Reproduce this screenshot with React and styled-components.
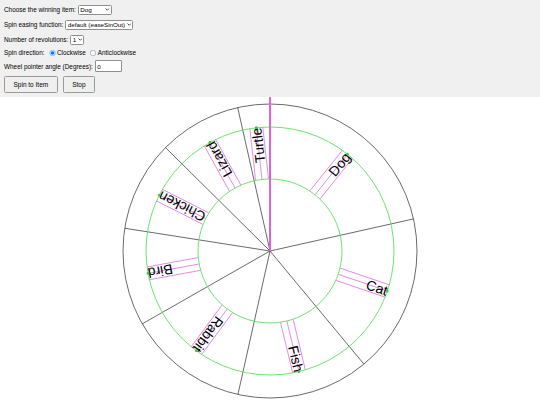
import React from 'react';
import styled, { createGlobalStyle } from 'styled-components';

const GlobalStyle = createGlobalStyle`
  html, body {
    margin: 0;
    padding: 0;
    background: #fff;
  }
  body {
    font-family: "Liberation Sans", Arial, sans-serif;
    font-size: 13px;
    color: #000;
  }
`

// the controls are laid out at normal size, then zoomed to half like the page
const Panel = styled.div`
  zoom: 0.5;
  background: #f0f0f0;
  padding: 9px 8px 8px;
  display: flex;
  flex-direction: column;
  gap: 10px;
`
const Row = styled.div`
  display: flex;
  align-items: center;
  gap: ${p => p.gap ?? 4}px;
  height: ${p => p.h || 20}px;
`
const Label = styled.label`
  font-size: 12.8px;
  white-space: nowrap;
`
const SelectWrap = styled.span`
  position: relative;
  display: inline-flex;
`
const Select = styled.select`
  appearance: none;
  font-family: "Liberation Sans", Arial, sans-serif;
  font-size: 12.5px;
  color: #000;
  height: 20px;
  width: ${p => p.w}px;
  padding: 0 12px 0 3px;
  background: #fff;
  border: 1px solid #8f8f8f;
  border-radius: 3px;
  overflow: hidden;
  text-overflow: clip;
`
const Chevron = styled.svg`
  position: absolute;
  right: 4px;
  top: 7px;
  pointer-events: none;
`
const Radio = styled.input`
  margin: 0 3px 0 ${p => p.ml || 5}px;
  width: 13px;
  height: 13px;
`
const NumberInput = styled.input`
  font-family: "Liberation Sans", Arial, sans-serif;
  font-size: 12.5px;
  width: 44px;
  height: 17px;
  padding: 1px 3px;
  box-sizing: content-box;
  background: #fff;
  border: 1px solid #8f8f8f;
  border-radius: 2px;
`
const Buttons = styled.div`
  display: flex;
  gap: 10px;
`
const Button = styled.button`
  font-family: "Liberation Sans", Arial, sans-serif;
  font-size: 13px;
  color: #000;
  height: 34px;
  padding: 0 17px;
  background: #efefef;
  border: 1px solid #9a9a9a;
  border-radius: 3px;
`
const WheelArea = styled.div`
  height: 309px;
  overflow: hidden;
`

const CX = 270;
const CY = 154;
const R = 147;
const LABEL_R = 124;
const LABEL_R_MAX = 72;

const items = [
  { label: 'Dog', from: 0, to: 77.4 },
  { label: 'Cat', from: 77.4, to: 140.3 },
  { label: 'Fish', from: 140.3, to: 192.6 },
  { label: 'Rabbit', from: 192.6, to: 240.3 },
  { label: 'Bird', from: 240.3, to: 278.9 },
  { label: 'Chicken', from: 278.9, to: 314.7 },
  { label: 'Lizard', from: 314.7, to: 347.3 },
  { label: 'Turtle', from: 347.3, to: 360 },
];

const pt = (a, r) => {
  const rad = (a * Math.PI) / 180;
  return [CX + r * Math.sin(rad), CY - r * Math.cos(rad)];
};

const Dropdown = ({ w, defaultValue, children }) => (
  <SelectWrap>
    <Select w={w} defaultValue={defaultValue}>{children}</Select>
    <Chevron width="9" height="6" viewBox="0 0 9 6">
      <polyline points="1,1 4.5,4.5 8,1" fill="none" stroke="#222" strokeWidth="1.6" />
    </Chevron>
  </SelectWrap>
);

const Wheel = () => (
  <svg width="540" height="309" viewBox="0 0 540 309">
    <circle cx={CX} cy={CY} r={R} fill="#fff" stroke="#444" strokeWidth="0.8" />
    {items.map(it => {
      const [x, y] = pt(it.from, R);
      return <line key={it.label} x1={CX} y1={CY} x2={x} y2={y} stroke="#444" strokeWidth="0.8" />;
    })}
    <circle cx={CX} cy={CY} r={LABEL_R} fill="none" stroke="#5ee05e" strokeWidth="0.9" />
    <circle cx={CX} cy={CY} r={LABEL_R_MAX} fill="none" stroke="#5ee05e" strokeWidth="0.9" />
    {items.map(it => {
      const mid = (it.from + it.to) / 2;
      return (
        <g key={it.label} transform={`rotate(${mid - 90} ${CX} ${CY})`}>
          {[-6.5, 0, 6.5].map(d => (
            <line key={d} x1={CX + LABEL_R_MAX} y1={CY + d} x2={CX + LABEL_R} y2={CY + d} stroke="#e07ae0" strokeWidth="0.8" />
          ))}
          <text
            x={CX + LABEL_R}
            y={CY}
            textAnchor="end"
            dominantBaseline="central"
            fontFamily='"Liberation Sans", Arial, sans-serif'
            fontSize="14"
            fill="#000"
          >
            {it.label}
          </text>
          <circle cx={CX + LABEL_R} cy={CY} r="1.4" fill="#3c3" />
        </g>
      );
    })}
    <line x1={CX} y1="0" x2={CX} y2={CY} stroke="#d966d9" strokeWidth="2" />
  </svg>
);

const App = () => {
  return (
    <>
      <GlobalStyle />
      <Panel>
        <Row>
          <Label>Choose the winning item:</Label>
          <Dropdown w={68} defaultValue="Dog">
            {items.map(it => <option key={it.label}>{it.label}</option>)}
          </Dropdown>
        </Row>
        <Row>
          <Label>Spin easing function:</Label>
          <Dropdown w={136} defaultValue="default">
            <option value="default">default (easeSinOut)</option>
            <option>easeSinInOut</option>
            <option>easeCubicOut</option>
          </Dropdown>
        </Row>
        <Row>
          <Label>Number of revolutions:</Label>
          <Dropdown w={28} defaultValue="1">
            <option>1</option>
            <option>2</option>
            <option>3</option>
          </Dropdown>
        </Row>
        <Row h={13} gap={0}>
          <Label>Spin direction:</Label>
          <Radio type="radio" name="dir" defaultChecked ml={9} />
          <Label>Clockwise</Label>
          <Radio type="radio" name="dir" ml={8} />
          <Label>Anticlockwise</Label>
        </Row>
        <Row>
          <Label>Wheel pointer angle (Degrees):</Label>
          <NumberInput type="text" defaultValue="0" />
        </Row>
        <Buttons>
          <Button>Spin to Item</Button>
          <Button>Stop</Button>
        </Buttons>
      </Panel>
      <WheelArea>
        <Wheel />
      </WheelArea>
    </>
  );
};

export default App;
